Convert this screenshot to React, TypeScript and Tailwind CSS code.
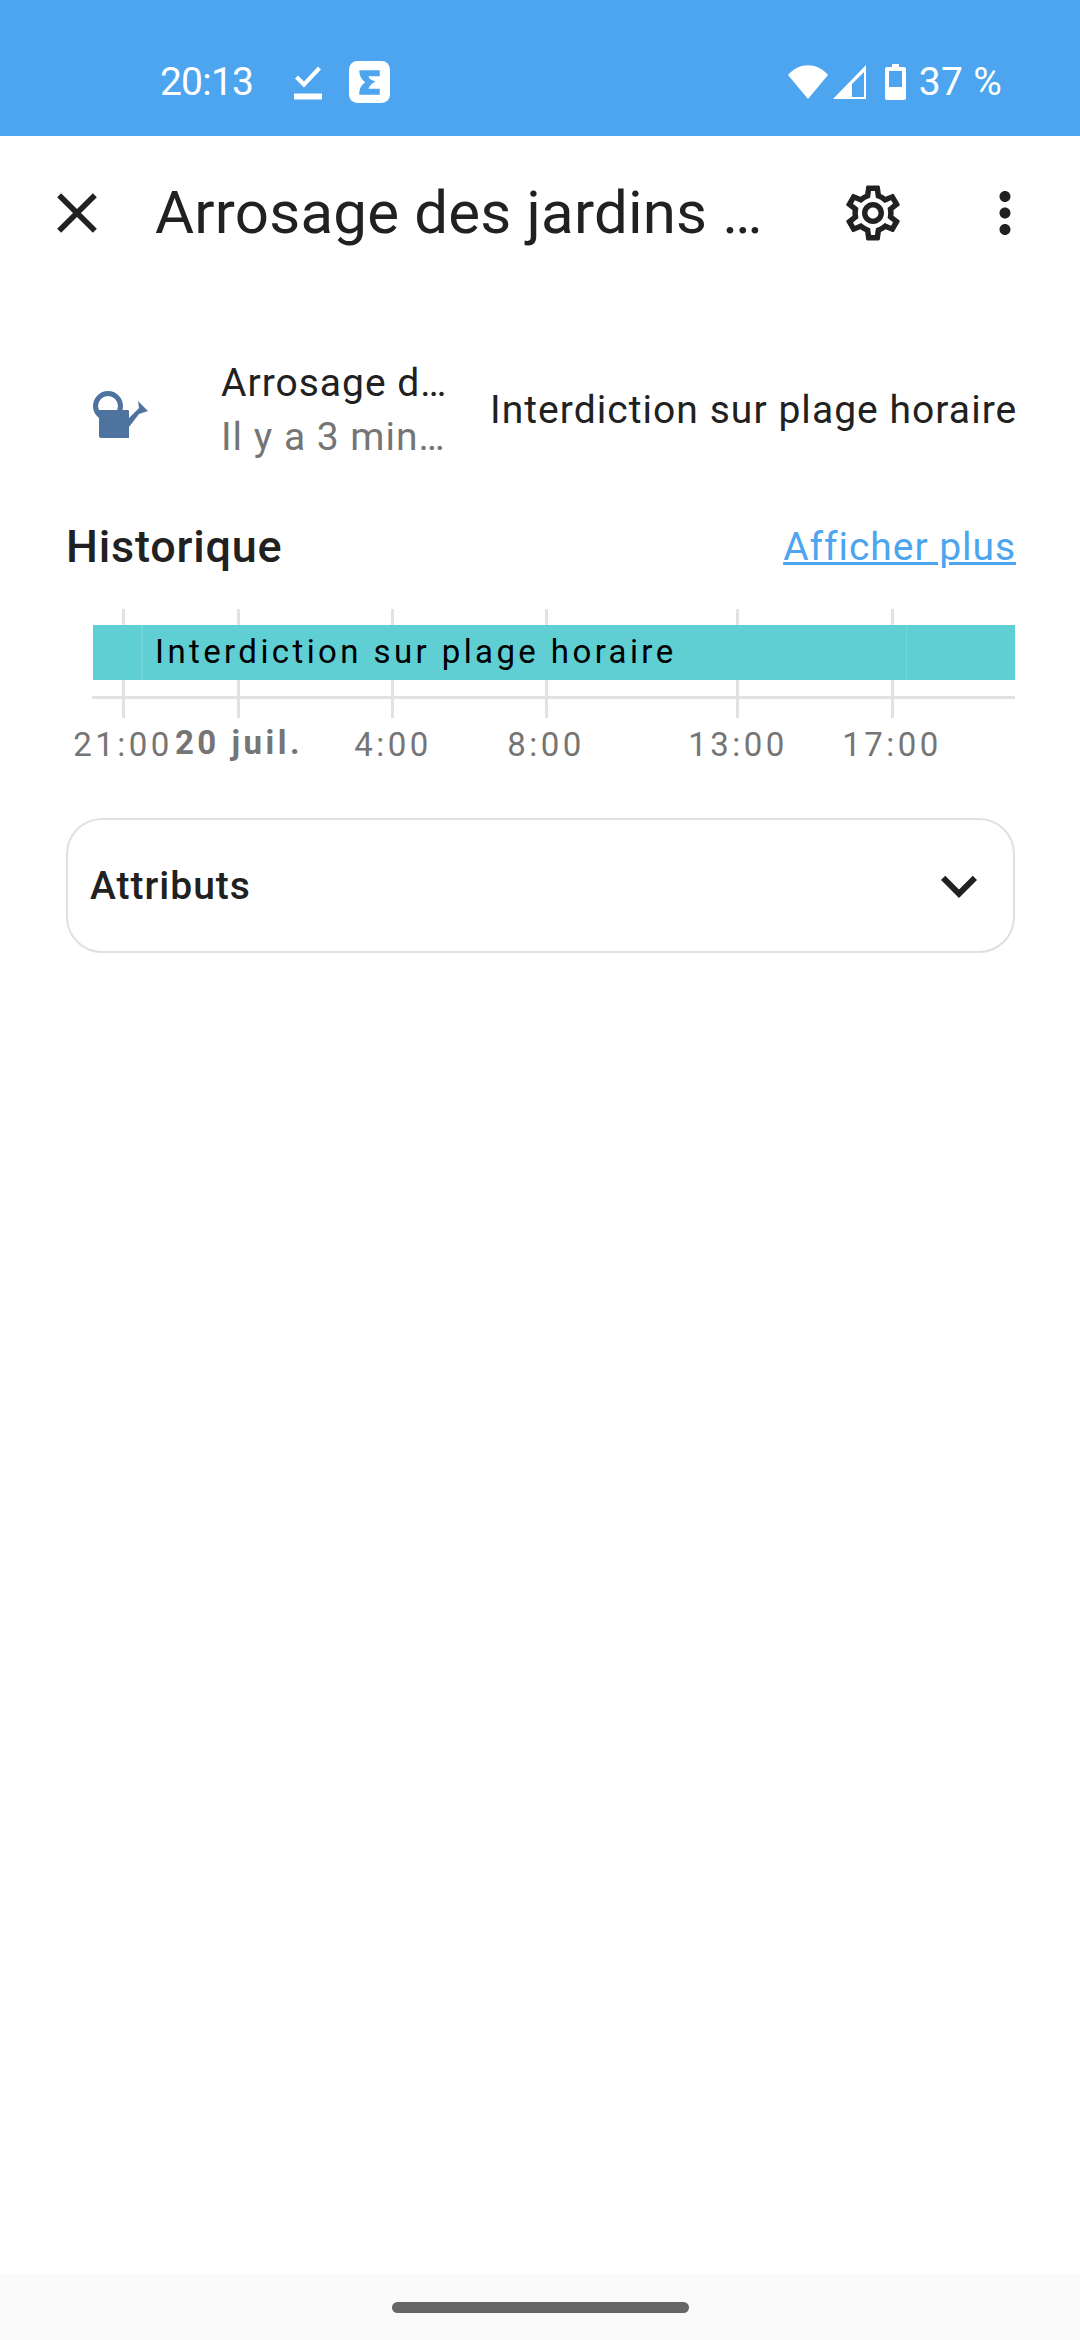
import React from 'react';
import { MdClose, MdExpandMore, MdMoreVert, MdOutlineSettings } from 'react-icons/md';

const gridLines = [123, 238, 392, 546, 737, 892];

const ticks = [
  { label: '21:00', center: 123 },
  { label: '20 juil.', center: 239, bold: true },
  { label: '4:00', center: 393 },
  { label: '8:00', center: 546 },
  { label: '13:00', center: 738 },
  { label: '17:00', center: 892 },
];

function StatusBar() {
  return (
    <div className="h-[136px] bg-[#4ca5ee] flex items-start justify-between pt-[61px] pl-[160px] pr-[78px] text-white font-['Roboto',sans-serif] text-[39px] leading-[42px]">
      <div className="flex items-center">
        <span className="w-[92px] tracking-[-0.8px]">20:13</span>
        <svg className="ml-[42px]" width="28" height="35" viewBox="0 0 28 34" fill="white">
          <path d="M1 13 L4 10 L10 16 L24 1 L27 4 L10 22 Z" />
          <rect x="0" y="28" width="28" height="6" />
        </svg>
        <svg className="ml-[27px]" width="41" height="42" viewBox="0 0 40 41">
          <rect width="40" height="41" rx="8" fill="white" />
          <path
            d="M10 9 H30 V15 H19 C20 18 22 19 26 20 C22 22 20 24 19 27 H30 V33 H10 C10 27 12 23 16 21 C12 18 10 14 10 9 Z"
            fill="#4ca5ee"
          />
        </svg>
      </div>
      <div className="flex items-center">
        <svg width="40" height="34" viewBox="0 0 40 34" fill="white">
          <path d="M0 10 C11 -3 29 -3 40 10 L20 34 Z" />
        </svg>
        <svg className="ml-[5px]" width="34" height="34" viewBox="0 0 34 34" fill="white">
          <path fillRule="evenodd" d="M33 0 V34 H0 Z M31 7 L19 19 V32 H31 Z" />
        </svg>
        <svg className="ml-[18px]" width="21" height="36" viewBox="0 0 21 36" fill="white">
          <path
            fillRule="evenodd"
            d="M7 0 H14 V3 H19 Q21 3 21 5 V34 Q21 36 19 36 H2 Q0 36 0 34 V5 Q0 3 2 3 H7 Z M4 7 V23 H17 V7 Z"
          />
        </svg>
        <span className="ml-[13px] tracking-[0.3px]">37 %</span>
      </div>
    </div>
  );
}

function Toolbar() {
  return (
    <div className="h-[154px] flex items-center text-[#212121]">
      <MdClose className="ml-[43px] shrink-0" size={68} color="#212121" />
      <div className="ml-[44px] w-[660px] text-[60px] leading-[72px] tracking-[0.2px] truncate">Arrosage des jardins …</div>
      <MdOutlineSettings className="ml-[25px] shrink-0" size={66} color="#212121" />
      <MdMoreVert className="ml-[66px] shrink-0" size={66} color="#212121" />
    </div>
  );
}

function WateringCan() {
  return (
    <svg width="55" height="47" viewBox="0 0 55 47" fill="#4f739f">
      <circle cx="15" cy="15" r="12.5" fill="none" stroke="#4f739f" strokeWidth="5" />
      <path d="M6 19 H35 Q36 19 36 20 V47 H8 Q6 47 6 45 Z" />
      <path d="M3 22 L9 22 L9 30 Z" />
      <path d="M36 27 L46 17 L45 10 L55 20 L46 23 L36 36 Z" />
    </svg>
  );
}

function HistoryChart() {
  return (
    <div className="relative h-[170px]">
      {gridLines.map((x) => (
        <div key={x} className="absolute top-0 h-[109px] w-[3px] bg-[#e2e2e2]" style={{ left: x - 1 }} />
      ))}
      <div className="absolute left-[92px] right-[65px] top-[87px] h-[3px] bg-[#e2e2e2]" />
      <div className="absolute left-[93px] right-[65px] top-[16px] h-[55px] bg-[#5fcfd4] flex items-center">
        <span className="ml-[62px] -mt-[2px] text-[33px] leading-[40px] tracking-[3.4px] text-black">Interdiction sur plage horaire</span>
        <div className="absolute left-[48px] top-0 h-full w-[2px] bg-[#72d6da]" />
        <div className="absolute left-[813px] top-0 h-full w-[1px] bg-[#72d6da]" />
      </div>
      {ticks.map((t) => (
        <div
          key={t.label}
          className={`absolute top-[116px] -translate-x-1/2 whitespace-nowrap text-[33px] leading-[40px] tracking-[3.5px] text-[#757575] ${t.bold ? 'font-bold -mt-[2px]' : ''}`}
          style={{ left: t.center }}
        >
          {t.label}
        </div>
      ))}
    </div>
  );
}

export default function App() {
  return (
    <div className="w-[1080px] h-[2340px] bg-white flex flex-col font-['Roboto',sans-serif] antialiased overflow-hidden">
      <StatusBar />
      <Toolbar />
      <div className="flex-1 flex flex-col">
        <div className="mt-[65px] h-[110px] flex items-center">
          <div className="ml-[93px] mt-[9px] w-[55px] shrink-0"><WateringCan /></div>
          <div className="ml-[73px] w-[230px] shrink-0 tracking-[1px]">
            <div className="text-[39px] leading-[54px] text-[#212121] truncate">Arrosage d…</div>
            <div className="text-[39px] leading-[54px] text-[#757575] truncate">Il y a 3 min…</div>
          </div>
          <div className="ml-[39px] text-[39px] leading-[54px] tracking-[1.05px] text-[#212121] whitespace-nowrap">Interdiction sur plage horaire</div>
        </div>
        <div className="mt-[52px] ml-[66px] mr-[64px] flex items-center justify-between">
          <span className="text-[45px] leading-[60px] font-medium tracking-[0.8px] text-[#212121]">Historique</span>
          <span className="text-[39px] leading-[60px] tracking-[0.95px] text-[#4ca5ee] underline">Afficher plus</span>
        </div>
        <div className="mt-[32px]">
          <HistoryChart />
        </div>
        <div className="mt-[39px] ml-[66px] mr-[65px] h-[135px] rounded-[36px] border-[2px] border-[#e0e0e0] flex items-center justify-between pl-[22px] pr-[18px]">
          <span className="text-[39px] leading-[50px] font-medium tracking-[1px] text-[#212121]">Attributs</span>
          <MdExpandMore size={72} color="#212121" />
        </div>
      </div>
      <div className="h-[66px] bg-[#fafafa] flex items-center justify-center">
        <div className="w-[297px] h-[11px] rounded-full bg-[#666666]" />
      </div>
    </div>
  );
}
